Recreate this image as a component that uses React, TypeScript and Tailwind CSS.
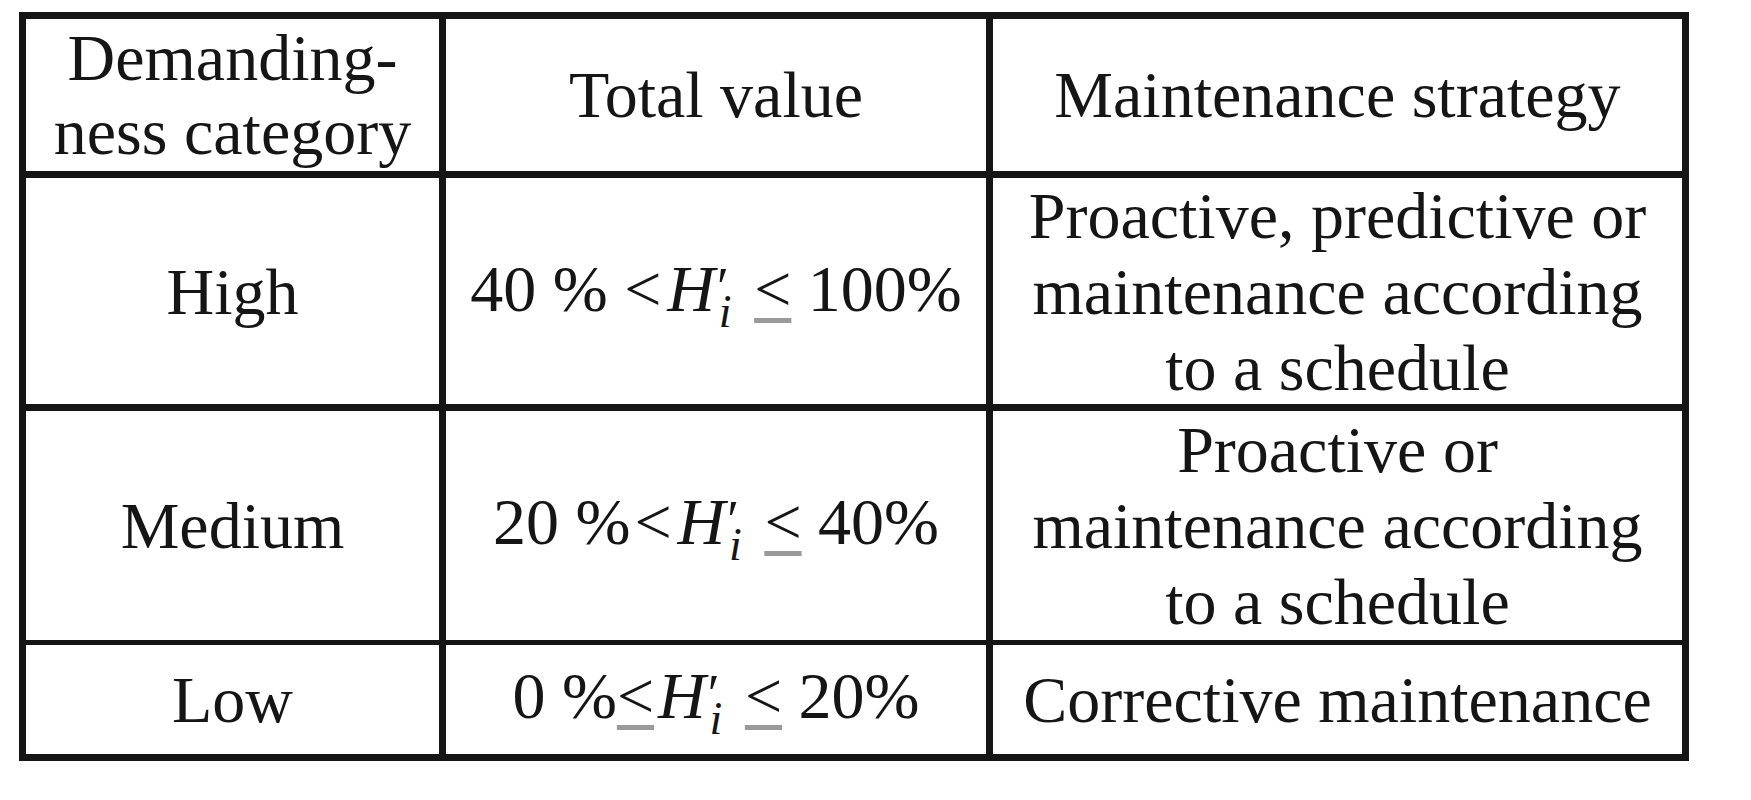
import React from 'react';

/* ----------  small pieces  ---------- */

// "<" with the grey bar under it, as the scan shows the ≤ sign
const Leq = ({ className = '' }: { className?: string }) => (
  <span className={`underline decoration-[#9a9a9a] decoration-[length:5px] underline-offset-[7px] ${className}`}>&lt;</span>
);

// H′ with subscript i (shifted with top so the line box stays put)
const Hi = () => (
  <span className="whitespace-nowrap mr-[6px]">
    <i>H</i>
    <span className="relative top-[-6px] ml-[2px] mr-[-10px] text-[54px]">′</span>
    <i className="relative top-[16px] text-[46px]">i</i>
  </span>
);

type Row = {
  category: string;
  value: React.ReactNode;
  strategy: string[];
  height: string;
  border: string;
};

const rows: Row[] = [
  {
    category: 'High',
    value: (
      <>
        40&nbsp;% <span className="mr-[6px]">&lt;</span>
        <Hi /> <Leq /> 100%
      </>
    ),
    strategy: ['Proactive, predictive or', 'maintenance according', 'to a schedule'],
    height: 'h-[233px]',
    border: 'border-t-[7px]',
  },
  {
    category: 'Medium',
    value: (
      <>
        20&nbsp;%<span className="ml-[4px] mr-[6px]">&lt;</span>
        <Hi /> <Leq /> 40%
      </>
    ),
    strategy: ['Proactive or', 'maintenance according', 'to a schedule'],
    height: 'h-[236px]',
    border: 'border-t-[7px]',
  },
  {
    category: 'Low',
    value: (
      <>
        0&nbsp;%<Leq className="mr-[4px]" />
        <Hi /> <Leq /> 20%
      </>
    ),
    strategy: ['Corrective maintenance'],
    height: 'h-[114px]',
    border: 'border-t-[5px]',
  },
];

export default function App() {
  return (
    <div className="w-[1751px] h-[800px] bg-white pt-[12px] pl-[19px] font-['Liberation_Serif',serif] text-[66px] leading-[74px] text-[#151515]">
      <div className="w-[1670px] border-[7px] border-[#151515]">
        {/* Header */}
        <div className="grid grid-cols-[413px_547px_696px] h-[152px]">
          <div className="flex flex-col items-center justify-center text-center">
            <span>Demanding-</span>
            <span>ness category</span>
          </div>
          <div className="flex items-center justify-center border-l-[7px] border-[#151515]">
            Total value
          </div>
          <div className="flex items-center justify-center border-l-[7px] border-[#151515]">
            Maintenance strategy
          </div>
        </div>

        {/* Body */}
        {rows.map((row) => (
          <div
            key={row.category}
            className={`grid grid-cols-[413px_547px_696px] border-[#151515] ${row.height} ${row.border}`}
          >
            <div className="flex items-center justify-center">{row.category}</div>
            <div className="flex items-center justify-center border-l-[7px] border-[#151515] whitespace-nowrap">
              <span>{row.value}</span>
            </div>
            <div className="flex flex-col items-center justify-center border-l-[7px] border-[#151515] text-center leading-[76px]">
              {row.strategy.map((line) => (
                <span key={line} className="whitespace-nowrap">{line}</span>
              ))}
            </div>
          </div>
        ))}
      </div>
    </div>
  );
}
